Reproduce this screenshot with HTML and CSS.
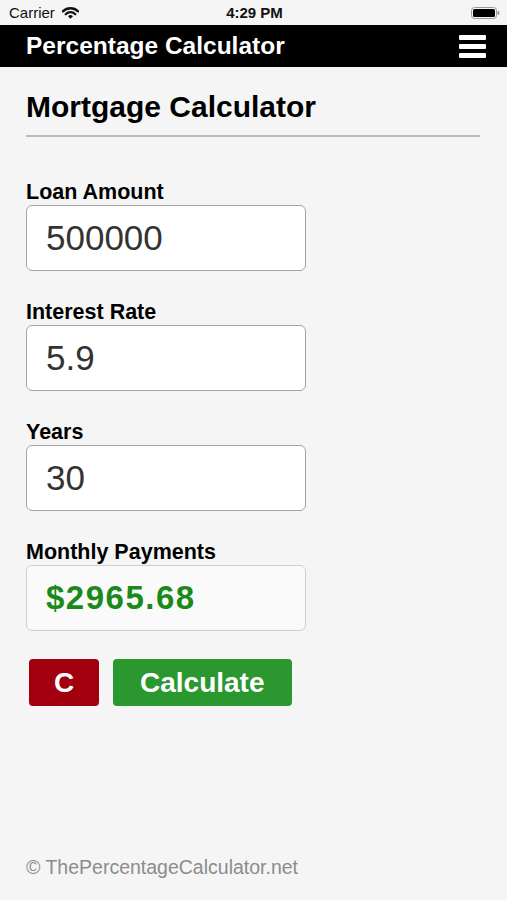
FILE: index.html
```html
<!DOCTYPE html>
<html lang="en">
<head>
  <meta charset="UTF-8">
  <meta name="viewport" content="width=device-width, initial-scale=1.0">
  <title>Mortgage Calculator</title>
  <link rel="stylesheet" href="styles.css">
</head>
<body>
  <div class="status-bar">
    <div class="carrier">
      Carrier
      <svg class="wifi" width="17" height="13" viewBox="0 0 17 13">
        <path d="M0.9 5.4 A10.8 10.8 0 0 1 16.1 5.4" fill="none" stroke="#111" stroke-width="2.3" stroke-linecap="round"/>
        <path d="M3.7 8.2 A6.8 6.8 0 0 1 13.3 8.2" fill="none" stroke="#111" stroke-width="2.3" stroke-linecap="round"/>
        <path d="M8.5 12.8 L6 10.3 A3.5 3.5 0 0 1 11 10.3 Z" fill="#111"/>
      </svg>
    </div>
    <div class="time">4:29 PM</div>
    <div class="battery">
      <svg width="29" height="12" viewBox="0 0 29 12">
        <rect x="0.5" y="0.5" width="25" height="11" rx="3" fill="none" stroke="#9a9a9a"/>
        <rect x="2" y="2" width="22" height="8" rx="1.5" fill="#000"/>
        <rect x="26.5" y="4" width="1.8" height="4" rx="0.8" fill="#9a9a9a"/>
      </svg>
    </div>
  </div>

  <header class="nav-bar">
    <div class="nav-title">Percentage Calculator</div>
    <div class="menu-btn">
      <span></span>
      <span></span>
      <span></span>
    </div>
  </header>

  <main class="content">
    <h1 class="page-title">Mortgage Calculator</h1>
    <hr class="divider">

    <form class="calc-form" onsubmit="return false;">
      <div class="field">
        <label for="loan">Loan Amount</label>
        <input type="text" id="loan" class="field-input" value="500000">
      </div>
      <div class="field">
        <label for="rate">Interest Rate</label>
        <input type="text" id="rate" class="field-input" value="5.9">
      </div>
      <div class="field">
        <label for="years">Years</label>
        <input type="text" id="years" class="field-input" value="30">
      </div>
      <div class="field">
        <label>Monthly Payments</label>
        <div class="field-input result">$2965.68</div>
      </div>

      <div class="buttons">
        <button type="button" class="btn btn-clear">C</button>
        <button type="button" class="btn btn-calc">Calculate</button>
      </div>
    </form>
  </main>

  <footer class="footer">&copy; ThePercentageCalculator.net</footer>
</body>
</html>
```

FILE: styles.css
```css
body {
  margin: 0;
  min-height: 100vh;
  display: flex;
  flex-direction: column;
  background-color: #f5f5f5;
  font-family: "Liberation Sans", Arial, sans-serif;
  color: #000;
}

.status-bar {
  height: 25px;
  display: grid;
  grid-template-columns: 1fr auto 1fr;
  align-items: center;
  padding: 0 7px 0 9px;
  font-size: 15px;
  color: #111;
}
.carrier {
  display: flex;
  align-items: center;
  gap: 7px;
}
.wifi {
  margin-top: -1px;
}
.time {
  font-weight: bold;
  font-size: 15px;
}
.battery {
  display: flex;
  justify-content: flex-end;
}

.nav-bar {
  height: 42px;
  background-color: #000;
  display: flex;
  align-items: center;
  justify-content: space-between;
  padding: 0 21px 0 26px;
}
.nav-title {
  color: #fff;
  font-size: 24.5px;
  font-weight: bold;
}
.menu-btn {
  display: flex;
  flex-direction: column;
  gap: 4px;
}
.menu-btn span {
  display: block;
  width: 27px;
  height: 5px;
  background-color: #fff;
  border-radius: 1px;
}

.content {
  padding: 22px 27px 0 26px;
}
.page-title {
  margin: 0;
  font-size: 30px;
  line-height: 35px;
  font-weight: bold;
}
.divider {
  margin: 11px 0 0;
  border: none;
  height: 2px;
  background-color: #bcbcbc;
}

.calc-form {
  margin-top: 42px;
}
.field {
  margin-bottom: 28px;
}
.field label {
  display: block;
  font-size: 21.5px;
  line-height: 26px;
  font-weight: bold;
}
.field-input {
  display: block;
  box-sizing: border-box;
  width: 280px;
  height: 66px;
  margin: 0;
  padding: 0 19px;
  border: 1px solid #a4a4a4;
  border-radius: 6px;
  background-color: #fff;
  font-family: "Liberation Sans", Arial, sans-serif;
  font-size: 35px;
  line-height: 64px;
  color: #333;
  outline: none;
}
.result {
  background-color: #fafafa;
  border-color: #cfcfcf;
  color: #1b8a1b;
  font-size: 33px;
  font-weight: bold;
  letter-spacing: 1.5px;
}

.buttons {
  display: flex;
  gap: 14px;
  margin-top: 3px;
  padding-left: 3px;
}
.btn {
  height: 47px;
  padding: 0 27px;
  border: none;
  border-radius: 4px;
  font-family: "Liberation Sans", Arial, sans-serif;
  font-size: 28px;
  font-weight: bold;
  line-height: 47px;
  color: #fff;
  cursor: pointer;
}
.btn-clear {
  width: 70px;
  padding: 0;
  background-color: #a2000f;
}
.btn-calc {
  background-color: #2a982f;
}

.footer {
  margin-top: auto;
  padding: 0 26px 21px;
  font-size: 19.5px;
  line-height: 23px;
  color: #8c8c8c;
}
```
